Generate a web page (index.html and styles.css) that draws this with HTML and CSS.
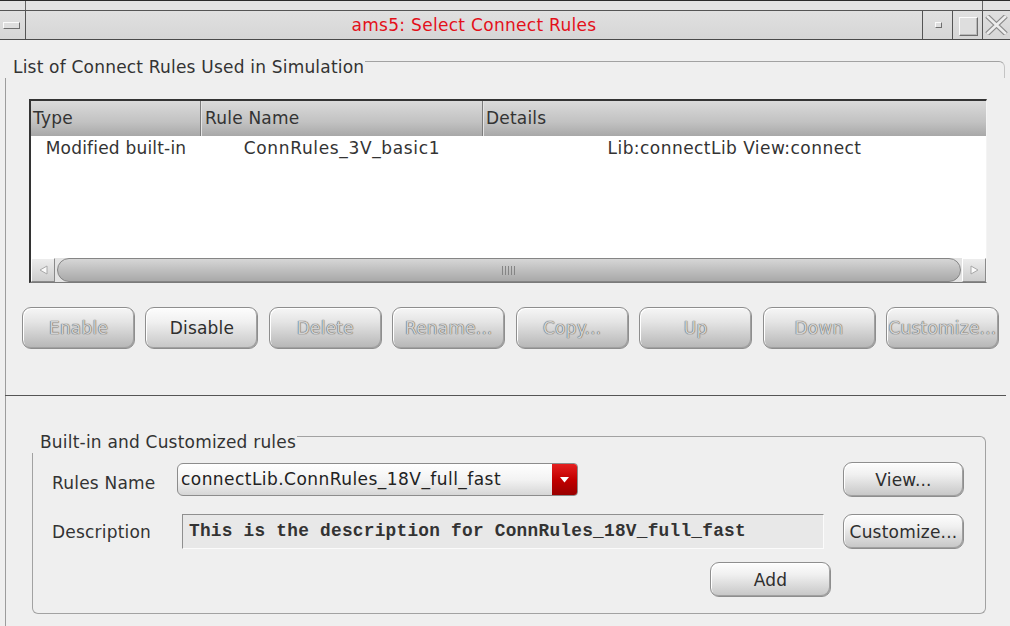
FILE: index.html
```html
<!DOCTYPE html>
<html>
<head>
<meta charset="utf-8">
<title>ams5: Select Connect Rules</title>
<link rel="stylesheet" href="styles.css">
</head>
<body>
<div class="frame-top"><div class="ft-left"></div><div class="ft-mid"></div><div class="ft-right"></div></div>
<div class="titlebar">
  <div class="tb-menu"><span class="raised menu-bar"></span></div>
  <div class="tb-title">ams5: Select Connect Rules</div>
  <div class="tb-btn tb-min"><span class="raised min-box"></span></div>
  <div class="tb-btn tb-max"><span class="raised max-box"></span></div>
  <div class="tb-btn tb-close">
    <svg width="23" height="20" viewBox="0 0 23 20"><path d="M2 1 L21 19 M21 1 L2 19" stroke="#8a8a8a" stroke-width="5"/><path d="M2 1 L21 19 M21 1 L2 19" stroke="#ececec" stroke-width="2.6"/></svg>
  </div>
</div>
<div class="main">
  <section class="pane-top">
    <div class="group-head g1-head"><span class="group-title">List of Connect Rules Used in Simulation</span><span class="group-line"></span></div>
    <div class="g1-body">
      <div class="table">
        <div class="thead">
          <div class="th">Type</div>
          <div class="th th-rule">Rule Name</div>
          <div class="th">Details</div>
        </div>
        <div class="tbody">
          <div class="tr">
            <div class="td">Modified built-in</div>
            <div class="td td-rule">ConnRules_3V_basic1</div>
            <div class="td">Lib:connectLib View:connect</div>
          </div>
        </div>
        <div class="hscroll">
          <div class="sb-btn"><svg width="9" height="10" viewBox="0 0 9 10"><polygon points="8,1 1,5 8,9" fill="#fafafa" stroke="#a8a8a8" stroke-width="1"/></svg></div>
          <div class="sb-trough"><div class="sb-thumb"><span class="grip"></span></div></div>
          <div class="sb-btn"><svg width="9" height="10" viewBox="0 0 9 10"><polygon points="1,1 8,5 1,9" fill="#fafafa" stroke="#a8a8a8" stroke-width="1"/></svg></div>
        </div>
      </div>
      <div class="btn-row">
        <button class="btn off">Enable</button>
        <button class="btn">Disable</button>
        <button class="btn off">Delete</button>
        <button class="btn off">Rename...</button>
        <button class="btn off">Copy...</button>
        <button class="btn off">Up</button>
        <button class="btn off">Down</button>
        <button class="btn off">Customize...</button>
      </div>
    </div>
  </section>
  <section class="pane-bottom">
    <div class="group2">
      <div class="group-head g2-head"><span class="group-title">Built-in and Customized rules</span><span class="group-line"></span></div>
      <div class="g2-body">
        <div class="frow">
          <span class="flabel lbl-rules">Rules Name</span>
          <div class="combo">
            <span class="combo-text">connectLib.ConnRules_18V_full_fast</span>
            <span class="combo-arrow"><svg width="9" height="6" viewBox="0 0 9 6"><polygon points="0,0 9,0 4.5,5.5" fill="#ffffff"/></svg></span>
          </div>
          <button class="btn side">View...</button>
        </div>
        <div class="frow r2">
          <span class="flabel lbl-desc">Description</span>
          <div class="desc">This is the description for ConnRules_18V_full_fast</div>
          <button class="btn side">Customize...</button>
        </div>
        <div class="frow r3">
          <button class="btn side add">Add</button>
        </div>
      </div>
    </div>
  </section>
</div>
</body>
</html>
```

FILE: styles.css
```css
* { box-sizing: border-box; }
html, body { margin: 0; padding: 0; }
body {
  width: 1010px;
  height: 626px;
  overflow: hidden;
  background: #efefef;
  font-family: "DejaVu Sans", sans-serif;
  font-size: 17px;
  letter-spacing: 0.2px;
  color: #2e2e2e;
}

/* window frame */
.frame-top {
  display: flex;
  height: 11px;
  border-top: 1px solid #2a2a2a;
  border-bottom: 1px solid #555;
  background: #e3e3e3;
}
.ft-left { width: 26px; border-right: 1px solid #666; }
.ft-mid { flex: 1; }
.ft-right { width: 28px; border-left: 1px solid #666; }

.titlebar {
  display: flex;
  height: 29px;
  border-bottom: 1px solid #4a4a4a;
  background: linear-gradient(#e0e0e0, #d6d6d6);
}
.tb-menu {
  width: 26px;
  border-right: 1px solid #555;
  display: flex;
  align-items: center;
  padding-left: 3px;
}
.raised {
  display: block;
  border: 1px solid;
  border-color: #fbfbfb #6f6f6f #6f6f6f #fbfbfb;
  background: #dedede;
}
.menu-bar { width: 17px; height: 7px; }
.tb-title {
  flex: 1;
  text-align: center;
  line-height: 28px;
  color: #e3101a;
  letter-spacing: 0.3px;
  white-space: nowrap;
}
.tb-btn {
  width: 30px;
  border-left: 1px solid #555;
  display: flex;
  align-items: center;
}
.tb-close { width: 28px; padding-left: 2px; }
.tb-close svg { display: block; }
.min-box { width: 7px; height: 6px; margin-left: 12px; }
.max-box { width: 19px; height: 19px; margin-left: 6px; margin-top: 3px; box-shadow: inset -1px -1px 0 #b8b8b8; }

/* content */
.main { padding-left: 5px; }

.pane-top {
  height: 356px;
  margin-right: 4px;
  border-bottom: 1px solid #555;
  display: flex;
  flex-direction: column;
}
.group-head { display: flex; align-items: flex-start; }
.group-title {
  line-height: 20px;
  padding-left: 8px;
  padding-right: 1px;
  color: #333;
  white-space: nowrap;
}
.group-line {
  flex: 1;
  align-self: stretch;
  border-top: 1px solid #a2a2a2;
  border-right: 1px solid #a2a2a2;
  border-top-right-radius: 6px;
}
.g1-head { height: 38px; }
.g1-head .group-title { margin-top: 17px; }
.g1-head .group-line { margin-top: 21px; border-right-color: #c4c4c4; margin-right: 1px; }

.g1-body {
  flex: 1;
  border-left: 1px solid #9c9c9c;
  padding: 21px 0 0 16px;
}

.table {
  margin-left: 7px;
  width: 958px;
  height: 184px;
  display: flex;
  flex-direction: column;
  border-style: solid;
  border-width: 2px 1px 1px 2px;
  border-color: #333 #f4f4f4 #7a7a7a #333;
  background: #fff;
}
.thead {
  height: 35px;
  display: grid;
  grid-template-columns: 170px 282px 1fr;
  background: linear-gradient(#dadada, #c2c2c2 60%, #a8a8a8);
  color: #333;
}
.th { line-height: 35px; padding-left: 2px; white-space: nowrap; }
.th + .th { border-left: 1px solid #e4e4e4; }
.th:not(:last-child) { border-right: 1px solid #7c7c7c; }
.th-rule { padding-left: 3px; }

.tbody { flex: 1; background: #fff; }
.tr {
  display: grid;
  grid-template-columns: 170px 282px 1fr;
  height: 24px;
  line-height: 24px;
  color: #333;
}
.td { text-align: center; white-space: nowrap; }
.td-rule { letter-spacing: 0.65px; }
.tr .td:last-child { letter-spacing: 0.45px; }

.hscroll { height: 24px; display: flex; background: #e4e4e4; }
.sb-btn {
  width: 24px;
  display: flex;
  align-items: center;
  justify-content: center;
  background: linear-gradient(#ededed, #cdcdcd);
  border: 1px solid;
  border-color: #fff #8a8a8a #8a8a8a #fff;
}
.sb-btn svg { display: block; }
.sb-trough { flex: 1; padding: 0 1px 0 2px; }
.sb-thumb {
  height: 100%;
  border: 1px solid #858585;
  border-radius: 12px;
  background: linear-gradient(#d6d6d6, #bfbfbf 50%, #a9a9a9);
  display: flex;
  align-items: center;
  justify-content: center;
}
.grip {
  display: block;
  width: 14px;
  height: 9px;
  background: repeating-linear-gradient(90deg, #858585 0 1px, transparent 1px 3px);
}

/* buttons */
.btn-row {
  display: flex;
  justify-content: space-between;
  width: 977px;
  margin-top: 24px;
}
.btn {
  font: inherit;
  letter-spacing: inherit;
  margin: 0;
  padding: 0;
  width: 113px;
  height: 42px;
  border: 1px solid #8e8e8e;
  border-radius: 9px;
  background: linear-gradient(#fdfdfd, #f0f0f0 35%, #c6c6c6);
  box-shadow: inset -1px -1px 0 #a0a0a0, inset 1px 1px 0 #ffffff;
  color: #2e2e2e;
  white-space: nowrap;
  text-align: center;
}
.btn.off {
  background: linear-gradient(#f6f6f6, #e4e4e4 35%, #b6b6b6);
  color: #d2d2d2;
  text-shadow: 0 0 1px #5a5a5a, 0 0 1px #5a5a5a;
}
.btn.side { width: 121px; height: 35px; margin-left: auto; }
.btn.add { margin-left: 658px; }

/* bottom pane */
.pane-bottom {
  height: 230px;
  border-left: 1px solid #9c9c9c;
  padding: 30px 0 0 26px;
}
.group2 { width: 954px; display: flex; flex-direction: column; }
.g2-head { height: 27px; }
.g2-head .group-title { margin-top: 6px; }
.g2-head .group-line { margin-top: 10px; }
.g2-body {
  border: 1px solid #a2a2a2;
  border-top: 0;
  border-radius: 0 0 6px 6px;
  padding: 9px 21px 16px 19px;
}
.frow { display: flex; align-items: center; height: 35px; }
.r2 { margin-top: 17px; }
.r3 { margin-top: 13px; }
.flabel { white-space: nowrap; line-height: 20px; color: #333; }
.lbl-rules { width: 125px; padding-top: 7px; }
.lbl-desc { width: 130px; }

.combo {
  width: 401px;
  height: 33px;
  display: flex;
  border: 1px solid #8c8c8c;
  border-radius: 6px 4px 4px 6px;
  background: linear-gradient(#ffffff, #f3f3f3 50%, #d6d6d6);
  overflow: hidden;
}
.combo-text { flex: 1; padding-left: 3px; line-height: 31px; color: #222; white-space: nowrap; letter-spacing: 0.45px; }
.combo-arrow {
  width: 25px;
  background: linear-gradient(#e42020, #c20000 50%, #990000);
  display: flex;
  align-items: center;
  justify-content: center;
}
.combo-arrow svg { display: block; }

.desc {
  width: 642px;
  height: 35px;
  border: 1px solid;
  border-color: #8f8f8f #fbfbfb #fbfbfb #8f8f8f;
  background: #e8e8e8;
  font-family: "Liberation Mono", monospace;
  font-weight: bold;
  font-size: 17.8px;
  letter-spacing: 0.25px;
  line-height: 33px;
  padding-left: 6px;
  color: #333;
  white-space: nowrap;
}
```
